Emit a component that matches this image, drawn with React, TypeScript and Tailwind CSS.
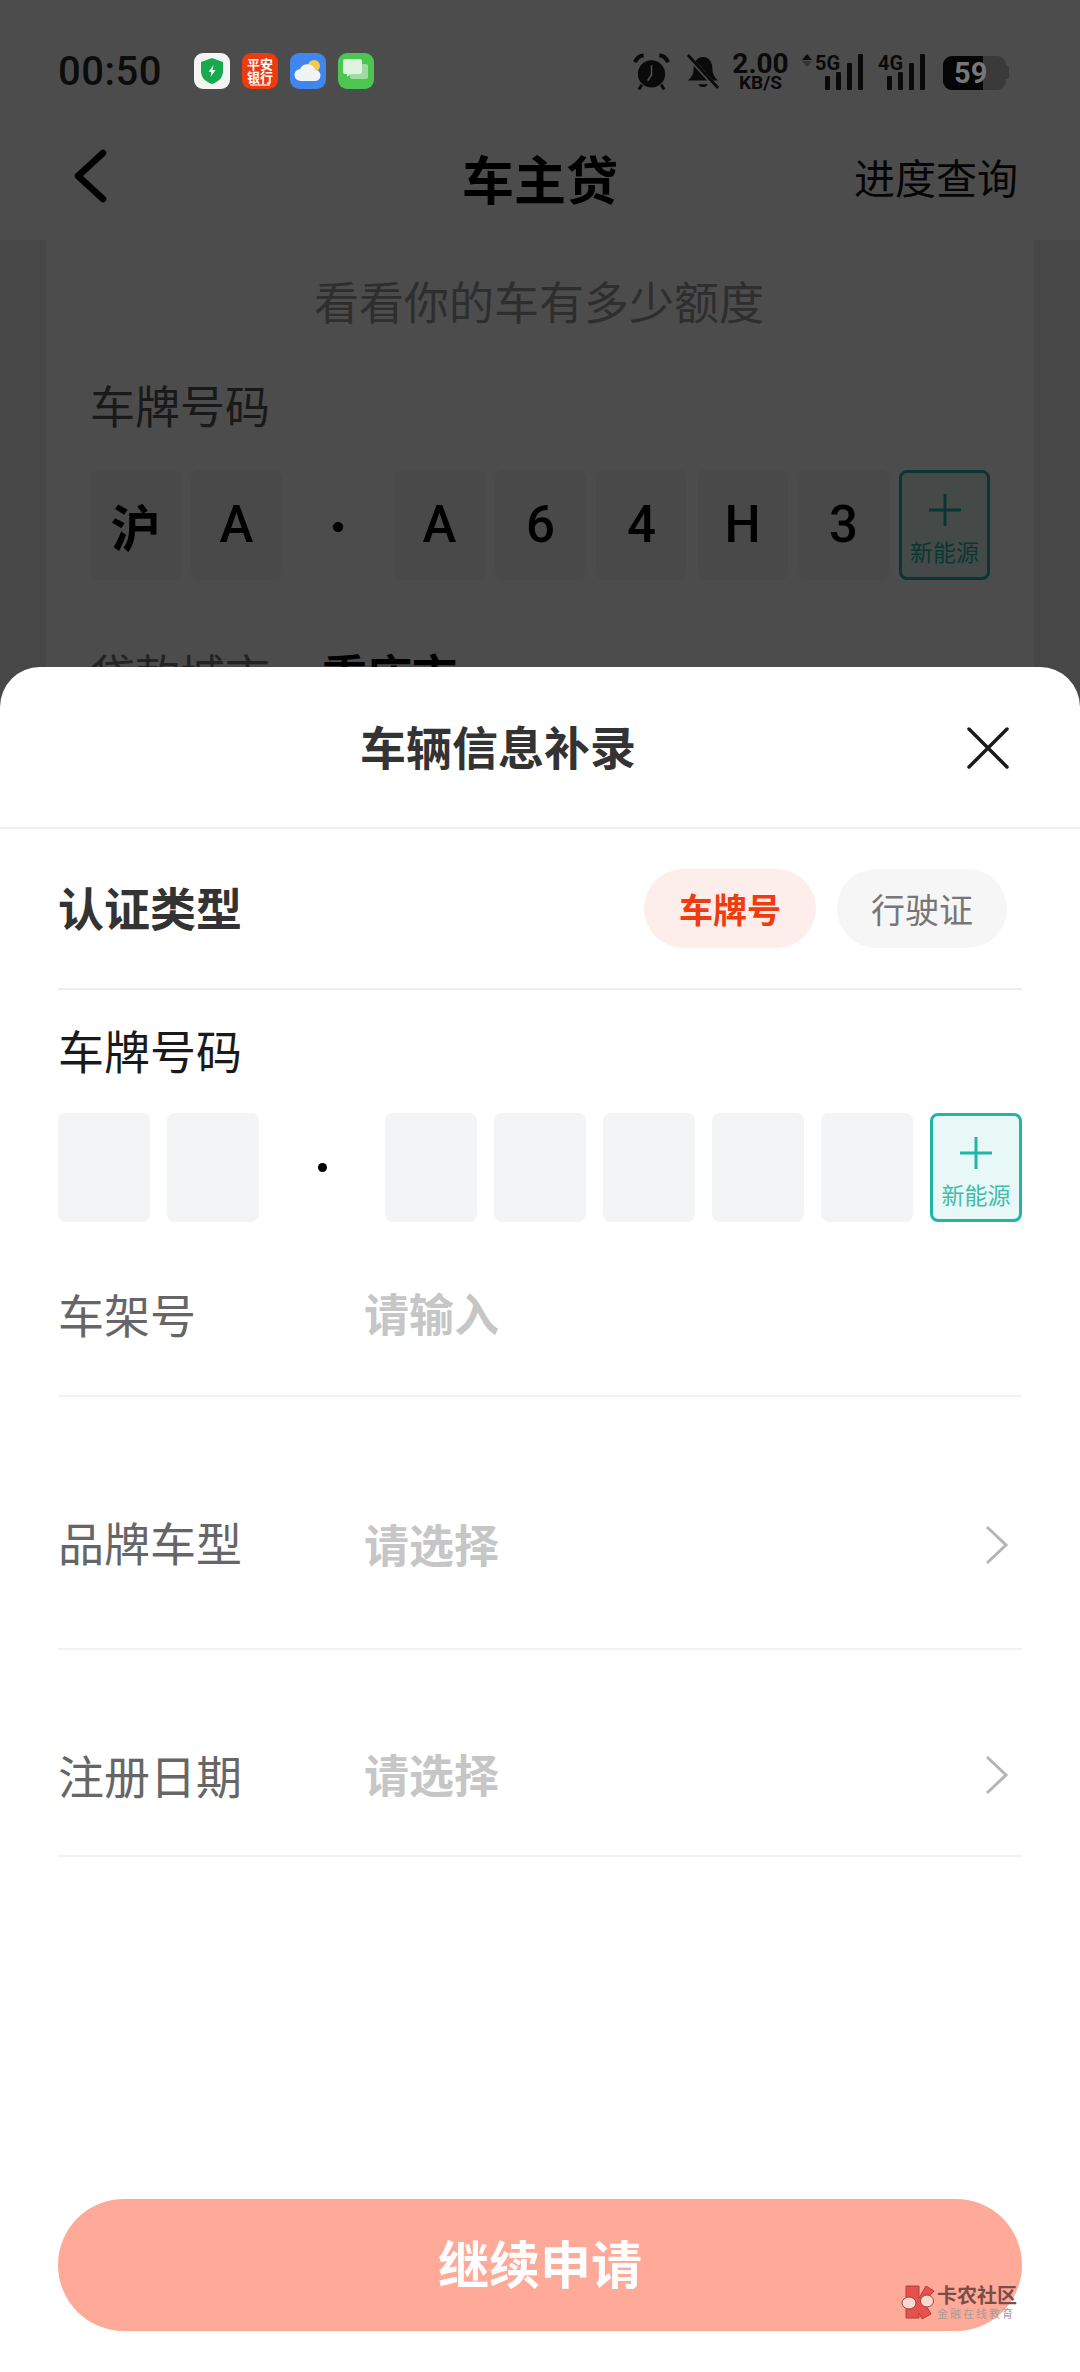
const FONT = "font-['Noto_Sans_CJK_SC','Noto_Sans',sans-serif]"

function Bars() {
  return (
    <div className="flex items-end gap-[6px]">
      <div className="w-[5px] h-[14px] rounded-[1px] bg-[#0a0a0a]" />
      <div className="w-[5px] h-[18px] rounded-[1px] bg-[#0a0a0a]" />
      <div className="w-[5px] h-[27px] rounded-[1px] bg-[#0a0a0a]" />
      <div className="w-[5px] h-[36px] rounded-[1px] bg-[#0a0a0a]" />
    </div>
  )
}

function StatusBar() {
  return (
    <div className="relative z-20 h-[110px] pt-[53px] pl-[58px] pr-[71px] flex items-start">
      <span className="w-[112px] h-[38px] leading-[38px] font-['Roboto',sans-serif] font-medium text-[40px] text-[#0c0c0c] tracking-[0.5px]">
        00:50
      </span>
      <div className="ml-[24px] flex gap-[12px]">
        <div className="w-[36px] h-[36px] rounded-[9px] bg-[#f2f5f2] flex items-center justify-center">
          <svg width="26" height="28" viewBox="0 0 26 28">
            <path d="M13 1 24 5v9c0 7-5 11-11 13C7 25 2 21 2 14V5z" fill="#17a94f" />
            <path d="M14.5 8 9.5 15h3l-1 5 5-7h-3z" fill="#fff" />
          </svg>
        </div>
        <div className="w-[36px] h-[36px] rounded-[9px] bg-[#ee3a10] flex flex-col items-center pt-[4px] text-white font-bold text-[13px] leading-[13px]">
          <span>平安</span>
          <span>银行</span>
          <div className="mt-[1px] w-[20px] h-[2px] bg-white/60" />
        </div>
        <div className="w-[36px] h-[36px] rounded-[9px] bg-[#3f86ee] flex items-center justify-center">
          <svg width="32" height="30" viewBox="0 0 32 30">
            <circle cx="22" cy="10" r="6" fill="#f5c94e" />
            <path d="M9 25a6 6 0 0 1-1-12 8 8 0 0 1 15 1 5.500 5.500 0 0 1 0 11z" fill="#f1f4f7" />
          </svg>
        </div>
        <div className="w-[36px] h-[36px] rounded-[9px] bg-[#4cc552] flex items-center justify-center">
          <svg width="28" height="28" viewBox="0 0 28 28">
            <rect x="8" y="7" width="18" height="15" rx="2" fill="#9fdca2" />
            <path d="M3 2h15a2 2 0 0 1 2 2v11a2 2 0 0 1-2 2H9l-4 3v-3H3a2 2 0 0 1-2-2V4a2 2 0 0 1 2-2z" fill="#dff3df" />
          </svg>
        </div>
      </div>
      <div className="ml-auto flex items-start">
        <svg width="37" height="38" viewBox="0 0 38 38">
          <circle cx="19" cy="21" r="14" fill="#0a0a0a" />
          <path d="M19 12v10l-4 6" stroke="#555" strokeWidth="1.500" fill="none" />
          <path d="M2 9c2-5 6-7 9-7M36 9c-2-5-6-7-9-7" stroke="#0a0a0a" strokeWidth="4" fill="none" />
          <path d="M9 32l-3 5M29 32l3 5" stroke="#0a0a0a" strokeWidth="3" />
        </svg>
        <svg width="34" height="38" viewBox="0 0 36 38" className="ml-[16px]">
          <path d="M18 3c-7 0-10 6-10 13 0 6-3 9-6 12h32c-3-3-6-6-6-12 0-7-3-13-10-13z" fill="#0a0a0a" />
          <path d="M13 32h10c-1 4-9 4-10 0z" fill="#0a0a0a" />
          <path d="M1 1l33 36" stroke="#4d4d4d" strokeWidth="5" />
          <path d="M2 1l32 35" stroke="#0a0a0a" strokeWidth="3" />
        </svg>
        <div className="ml-[12px] w-[57px] flex flex-col items-center font-['Roboto',sans-serif] font-bold text-[#0a0a0a]">
          <span className="h-[23px] leading-[22px] text-[28px]">2.00</span>
          <span className="h-[14px] leading-[14px] text-[19px]">KB/S</span>
        </div>
        <div className="ml-[13px] relative w-[61px] h-[37px] flex justify-end items-end">
          <span className="absolute left-0 top-[1px] w-0 h-0 border-x-[5px] border-x-transparent border-b-[6px] border-b-[#0a0a0a]" />
          <span className="absolute left-0 top-[8px] w-0 h-0 border-x-[5px] border-x-transparent border-t-[6px] border-t-[#333]" />
          <span className="absolute left-[13px] top-0 font-['Roboto',sans-serif] font-bold text-[20px] leading-[20px] text-[#0a0a0a]">5G</span>
          <Bars />
        </div>
        <div className="ml-[15px] relative w-[47px] h-[37px] flex justify-end items-end">
          <span className="absolute left-0 top-0 font-['Roboto',sans-serif] font-bold text-[20px] leading-[20px] text-[#0a0a0a]">4G</span>
          <Bars />
        </div>
        <div className="ml-[18px] relative mt-[3px] w-[63px] h-[34px] rounded-[9px] overflow-hidden bg-[#3a3a3a] flex">
          <div className="w-[40px] h-full bg-[#050505]" />
          <span className="absolute left-[11px] top-0 font-['Roboto',sans-serif] font-bold text-[29px] leading-[34px] text-[#777]">59</span>
        </div>
        <div className="mt-[13px] w-[3px] h-[13px] rounded-r-[2px] bg-[#3a3a3a]" />
      </div>
    </div>
  )
}

function NavBar() {
  return (
    <div className="relative h-[130px] flex items-center justify-center pt-[6px]">
      <svg width="40" height="56" viewBox="0 0 40 56" className="absolute left-[70px] top-[38px]">
        <path d="M33 5 8 28l25 23" stroke="#000" strokeWidth="6.500" strokeLinecap="round" strokeLinejoin="round" fill="none" />
      </svg>
      <span className="text-[52px] leading-[60px] font-bold text-black">车主贷</span>
      <span className="absolute right-[62px] top-[36px] text-[41px] leading-[60px] text-[#111]">进度查询</span>
    </div>
  )
}

const BACK_PLATE = ["沪", "A", "·", "A", "6", "4", "H", "3"]

function BackCard() {
  return (
    <div className="bg-[#efefef] flex-1 px-[46px]">
      <div className="bg-white h-full pl-[44px] pr-[46px]">
        <div className="pt-[34px] text-center text-[45px] leading-[54px] text-[#999]">看看你的车有多少额度</div>
        <div className="mt-[47px] text-[45px] leading-[60px] text-[#555]">车牌号码</div>
        <div className="mt-[35px] flex gap-[10px]">
          {BACK_PLATE.map((c, i) =>
            c === "·" ? (
              <div key={i} className="w-[92px] h-[110px] shrink-0 flex items-center justify-center text-[44px] font-medium text-black">·</div>
            ) : (
              <div
                key={i}
                className={`w-[91px] h-[110px] shrink-0 rounded-[8px] bg-[#f3f4f5] flex items-center justify-center text-black ${
                  i === 0 ? "text-[50px] font-bold" : "text-[51px] font-medium font-['Roboto',sans-serif]"
                }`}
              >
                {c}
              </div>
            )
          )}
          <div className="w-[91px] h-[110px] shrink-0 rounded-[8px] border-[3px] border-[#1fb5a3] bg-[#e8f8f6] flex flex-col items-center">
            <svg width="32" height="32" viewBox="0 0 32 32" className="mt-[21px]">
              <path d="M16 0v32M0 16h32" stroke="#1fb5a3" strokeWidth="3" />
            </svg>
            <span className="mt-[10px] text-[23px] leading-[30px] text-[#1fb5a3]">新能源</span>
          </div>
        </div>
        <div className="mt-[64px] flex items-center text-[45px] leading-[60px]">
          <span className="w-[232px] text-[#777]">贷款城市</span>
          <span className="font-bold text-black">重庆市</span>
        </div>
      </div>
    </div>
  )
}

function Chevron() {
  return (
    <svg width="26" height="42" viewBox="0 0 26 42" className="ml-auto mr-[12px] mt-[2px]">
      <path d="M3 3l19 18L3 39" stroke="#b5b5b5" strokeWidth="3" fill="none" />
    </svg>
  )
}

function FormRow({ label, hint, pb, h, arrow, lift }: { label: string; hint: string; pb: string; h: string; arrow?: boolean; lift?: boolean }) {
  return (
    <div className={`${h} ${pb} border-b-2 border-[#f2f2f2] flex items-end`}>
      <div className="w-full h-[48px] flex items-center">
        <span className={`w-[306px] text-[46px] leading-[48px] text-[#666] ${lift ? "-translate-y-[3px]" : ""}`}>{label}</span>
        <span className="text-[45px] leading-[48px] font-bold text-[#c6c6c6]">{hint}</span>
        {arrow && <Chevron />}
      </div>
    </div>
  )
}

function PlateBox() {
  return <div className="w-[92px] h-[109px] shrink-0 rounded-[8px] bg-[#f3f4f5]" />
}

function Sheet() {
  return (
    <div className="absolute z-20 left-0 right-0 bottom-0 h-[1705px] bg-white rounded-t-[40px] flex flex-col">
      <div className="relative h-[162px] pr-[84px] pb-[4px] border-b-2 border-[#eeeeee] flex items-center justify-center">
        <span className="text-[46px] leading-[60px] font-bold text-[#333]">车辆信息补录</span>
        <svg width="44" height="44" viewBox="0 0 44 44" className="absolute left-[966px] top-[59px]">
          <path d="M3 3l38 38M41 3 3 41" stroke="#1c1c1c" strokeWidth="3.500" strokeLinecap="round" />
        </svg>
      </div>
      <div className="mx-[58px] flex-1 flex flex-col relative">
        <div className="h-[161px] border-b-2 border-[#eeeeee] flex items-center">
          <span className="mb-[5px] text-[46px] leading-[60px] font-bold text-[#333]">认证类型</span>
          <div className="ml-auto mr-[15px] flex gap-[21px]">
            <div className="w-[172px] h-[79px] rounded-full bg-[#fdeeeb] flex items-center justify-center text-[34px] font-bold text-[#f03a10]">车牌号</div>
            <div className="w-[170px] h-[79px] rounded-full bg-[#f6f6f6] flex items-center justify-center text-[34px] text-[#777]">行驶证</div>
          </div>
        </div>
        <div className="mt-[29px] text-[46px] leading-[60px] text-[#1a1a1a]">车牌号码</div>
        <div className="mt-[34px] flex gap-[17px]">
          <PlateBox />
          <PlateBox />
          <div className="w-[92px] h-[109px] shrink-0 flex items-center justify-center">
            <div className="w-[9px] h-[9px] rounded-full bg-black" />
          </div>
          <PlateBox />
          <PlateBox />
          <PlateBox />
          <PlateBox />
          <PlateBox />
          <div className="w-[92px] h-[109px] shrink-0 rounded-[8px] border-[3px] border-[#20b5a5] bg-[#e8f8f6] flex flex-col items-center">
            <svg width="32" height="32" viewBox="0 0 32 32" className="mt-[21px]">
              <path d="M16 0v32M0 16h32" stroke="#20b5a5" strokeWidth="3" />
            </svg>
            <span className="mt-[10px] text-[23px] leading-[30px] text-[#3fbcae]">新能源</span>
          </div>
        </div>
        <div className="mt-[11px]" />
        <FormRow label="车架号" hint="请输入" h="h-[164px]" pb="pb-[58px]" />
        <FormRow label="品牌车型" hint="请选择" h="h-[253px]" pb="pb-[80px]" arrow lift />
        <FormRow label="注册日期" hint="请选择" h="h-[207px]" pb="pb-[57px]" arrow />
        <button className="mt-auto mb-[41px] h-[132px] pb-[5px] rounded-full bg-[#ffaa99] text-white text-[51px] font-bold">继续申请</button>
        <Watermark />
      </div>
    </div>
  )
}

function Watermark() {
  return (
    <div className="absolute right-[5px] bottom-[52px] flex items-center">
      <svg width="33" height="35" viewBox="0 0 33 35">
        <path d="M5 1h13v12l7-12 8 5-10 11 7 12-9 5-3-6v5H5z" fill="#e8504c" stroke="#a8453f" strokeWidth="1" />
        <ellipse cx="8" cy="18" rx="7" ry="6" fill="#fbd7cd" stroke="#8a4a44" strokeWidth="1" />
        <ellipse cx="26" cy="16" rx="6.500" ry="6" fill="#fbd7cd" stroke="#8a4a44" strokeWidth="1" />
      </svg>
      <div className="ml-[3px] flex flex-col">
        <span className="text-[20px] leading-[22px] font-bold text-[#7b4d47]">卡农社区</span>
        <span className="text-[11px] leading-[14px] tracking-[2px] text-[#a89b98]">金融在线教育</span>
      </div>
    </div>
  )
}

export default function App() {
  return (
    <div className={`relative w-[1080px] h-[2372px] overflow-hidden bg-white flex flex-col ${FONT}`}>
      <StatusBar />
      <NavBar />
      <BackCard />
      <div className="absolute inset-0 z-10 bg-black/70" />
      <Sheet />
    </div>
  )
}
